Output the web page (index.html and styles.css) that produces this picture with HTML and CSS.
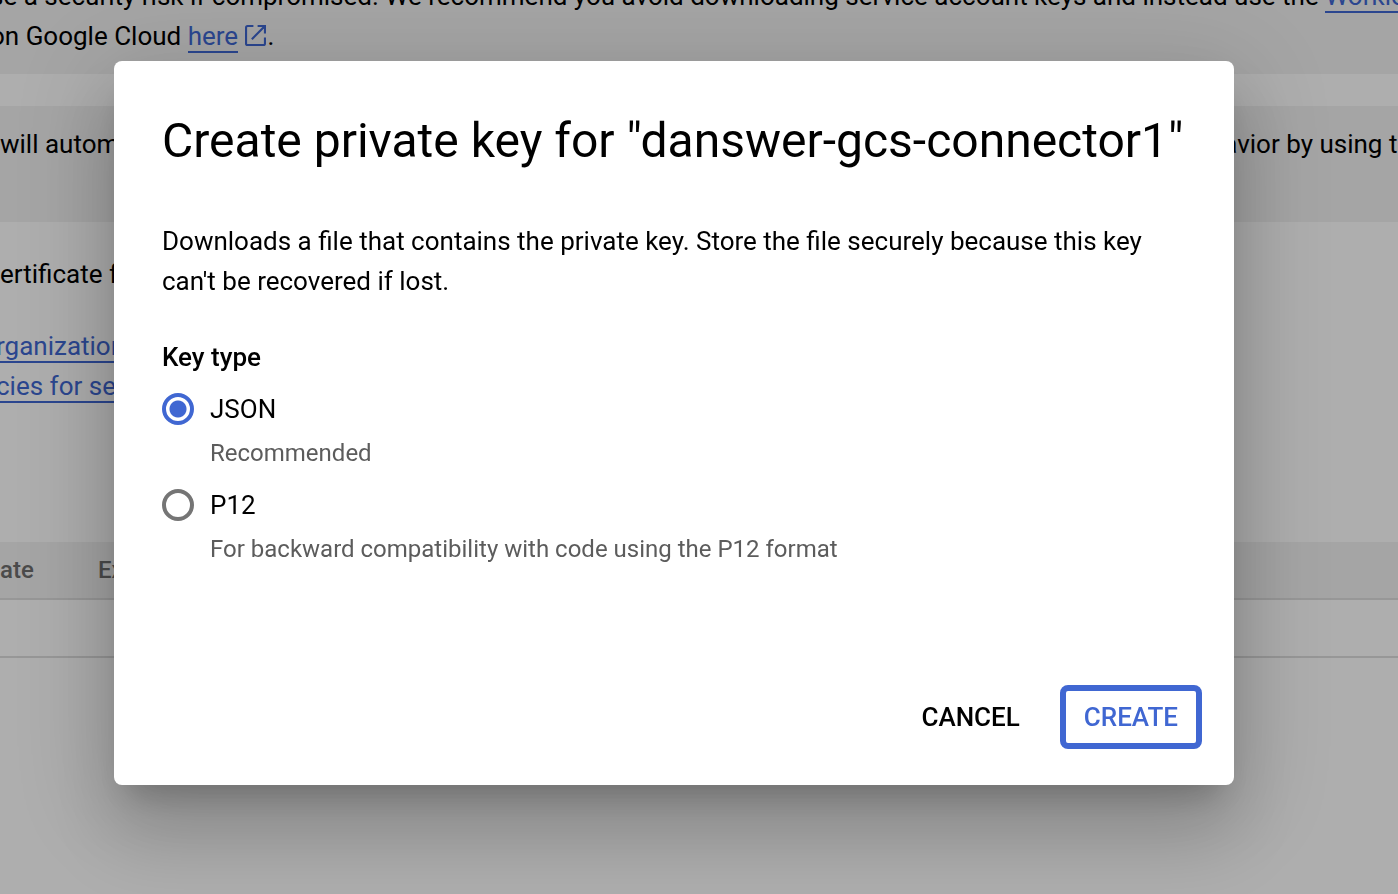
FILE: index.html
```html
<!DOCTYPE html>
<html lang="en">
<head>
<meta charset="utf-8">
<title>Service account keys</title>
<link rel="stylesheet" href="styles.css">
</head>
<body>
<main class="page">
  <section class="notice notice-first">
    <p class="line">se a security risk if compromised. We recommend you avoid downloading service account keys and instead use the <a class="link" href="#workload">Workload Identity Federation</a></p>
    <p class="line">on Google Cloud <a class="link" href="#here">here</a> <svg class="external" viewBox="0 0 20 20" aria-hidden="true"><path d="M8 1H2.500Q1 1 1 2.500V17.500Q1 19 2.500 19H17.500Q19 19 19 17.500V12M12 1H19V8M18.500 1.500L6.500 13.500" fill="none" stroke="currentColor" stroke-width="2"/></svg>.</p>
  </section>
  <section class="notice notice-second">
    <p class="line">will automatically disable service account keys detected in public repositories. You can customize this behavior by using the</p>
  </section>
  <section class="details">
    <p class="line">ertificate from an existing key pair.</p>
    <div class="policies">
      <p class="line"><a class="link" href="#policies">rganization policies</a>.</p>
      <p class="line"><a class="link" href="#accounts">cies for service accounts</a></p>
    </div>
  </section>
  <table class="keys">
    <thead><tr><th class="col-date">ate</th><th>Expiration date</th></tr></thead>
    <tbody><tr><td></td><td></td></tr></tbody>
  </table>
</main>
<div class="overlay">
  <form class="dialog" role="dialog" aria-labelledby="dialog-title">
    <h1 class="title" id="dialog-title">Create private key for "danswer-gcs-connector1"</h1>
    <p class="description">Downloads a file that contains the private key. Store the file securely because this key can't be recovered if lost.</p>
    <fieldset class="key-type">
      <legend class="legend">Key type</legend>
      <div class="option">
        <input class="radio" type="radio" name="type" id="json" aria-describedby="json-hint" checked>
        <label class="label" for="json">JSON</label>
        <p class="hint" id="json-hint">Recommended</p>
      </div>
      <div class="option">
        <input class="radio" type="radio" name="type" id="p12" aria-describedby="p12-hint">
        <label class="label" for="p12">P12</label>
        <p class="hint" id="p12-hint">For backward compatibility with code using the P12 format</p>
      </div>
    </fieldset>
    <div class="actions">
      <button class="button" type="button">CANCEL</button>
      <button class="button button-primary" type="button">CREATE</button>
    </div>
  </form>
</div>
</body>
</html>
```
FILE: styles.css
```css
* {
  box-sizing: border-box;
}

body {
  margin: 0;
  overflow: hidden;
  background: #aeaeae;
  color: #000;
  font: 400 26px/40px Roboto, sans-serif;
}

p, h1, fieldset {
  margin: 0;
  padding: 0;
  border: 0;
}

.page {
  height: 100vh;
  overflow: hidden;
}

.line {
  white-space: nowrap;
}

.link {
  color: #2b468f;
  text-decoration: none;
  border-bottom: 2px solid;
}

.external {
  width: 21px;
  height: 21px;
  margin-right: 2px;
  color: #2b468f;
  vertical-align: -1px;
}

.notice {
  background: #a5a5a5;
}

.notice-first {
  margin-top: -24px;
  margin-left: -10px;
  padding-bottom: 18px;
}

.notice-second {
  margin-top: 32px;
  padding: 18px 0 58px;
}

.details {
  padding: 32px 0 136px;
}

.policies {
  margin-top: 32px;
  margin-left: -4px;
}

.keys {
  width: 100%;
  border-collapse: separate;
  border-spacing: 0;
}

.keys th {
  height: 58px;
  padding: 0;
  background: #a5a5a5;
  border-bottom: 2px solid #979797;
  color: #4b4b4b;
  font-size: 24px;
  font-weight: 500;
  text-align: left;
}

.keys .col-date {
  width: 98px;
}

.keys td {
  height: 58px;
  padding: 0;
  border-bottom: 2px solid #979797;
}

.overlay {
  position: fixed;
  inset: 0;
  display: flex;
  align-items: flex-start;
  justify-content: center;
  padding: 61px 164px 0 114px;
}

.dialog {
  flex: 1;
  max-width: 1120px;
  padding: 48px 32px 36px 48px;
  background: #fff;
  border-radius: 8px;
  box-shadow: 0 22px 30px -14px rgba(0, 0, 0, 0.2),
    0 48px 76px 6px rgba(0, 0, 0, 0.14),
    0 18px 92px 16px rgba(0, 0, 0, 0.12);
}

.title {
  font-size: 48px;
  font-weight: 400;
  line-height: 64px;
}

.description {
  margin: 48px 32px 0 0;
}

.key-type {
  margin-top: 36px;
}

.legend {
  padding: 0;
  font-weight: 500;
}

.option {
  display: grid;
  grid-template-columns: 32px 1fr;
  column-gap: 16px;
  align-items: center;
  padding-top: 12px;
}

.radio {
  appearance: none;
  width: 32px;
  height: 32px;
  margin: 0;
  border: 4px solid #757575;
  border-radius: 50%;
}

.radio:checked {
  border-color: #4067d2;
  background: radial-gradient(circle, #4067d2 8px, #fff 9px);
}

.label {
  line-height: 40px;
}

.hint {
  grid-column: 2;
  padding-top: 4px;
  color: #5c5c5c;
  font-size: 24px;
  line-height: 40px;
}

.actions {
  display: flex;
  justify-content: flex-end;
  gap: 16px;
  margin-top: 116px;
}

.button {
  height: 64px;
  padding: 0 24px;
  background: none;
  border: 0;
  border-radius: 8px;
  color: #000;
  font: 500 26px/40px Roboto, sans-serif;
}

.button-primary {
  padding: 0 18px;
  border: 6px solid #4067d2;
  color: #4067d2;
}
```
